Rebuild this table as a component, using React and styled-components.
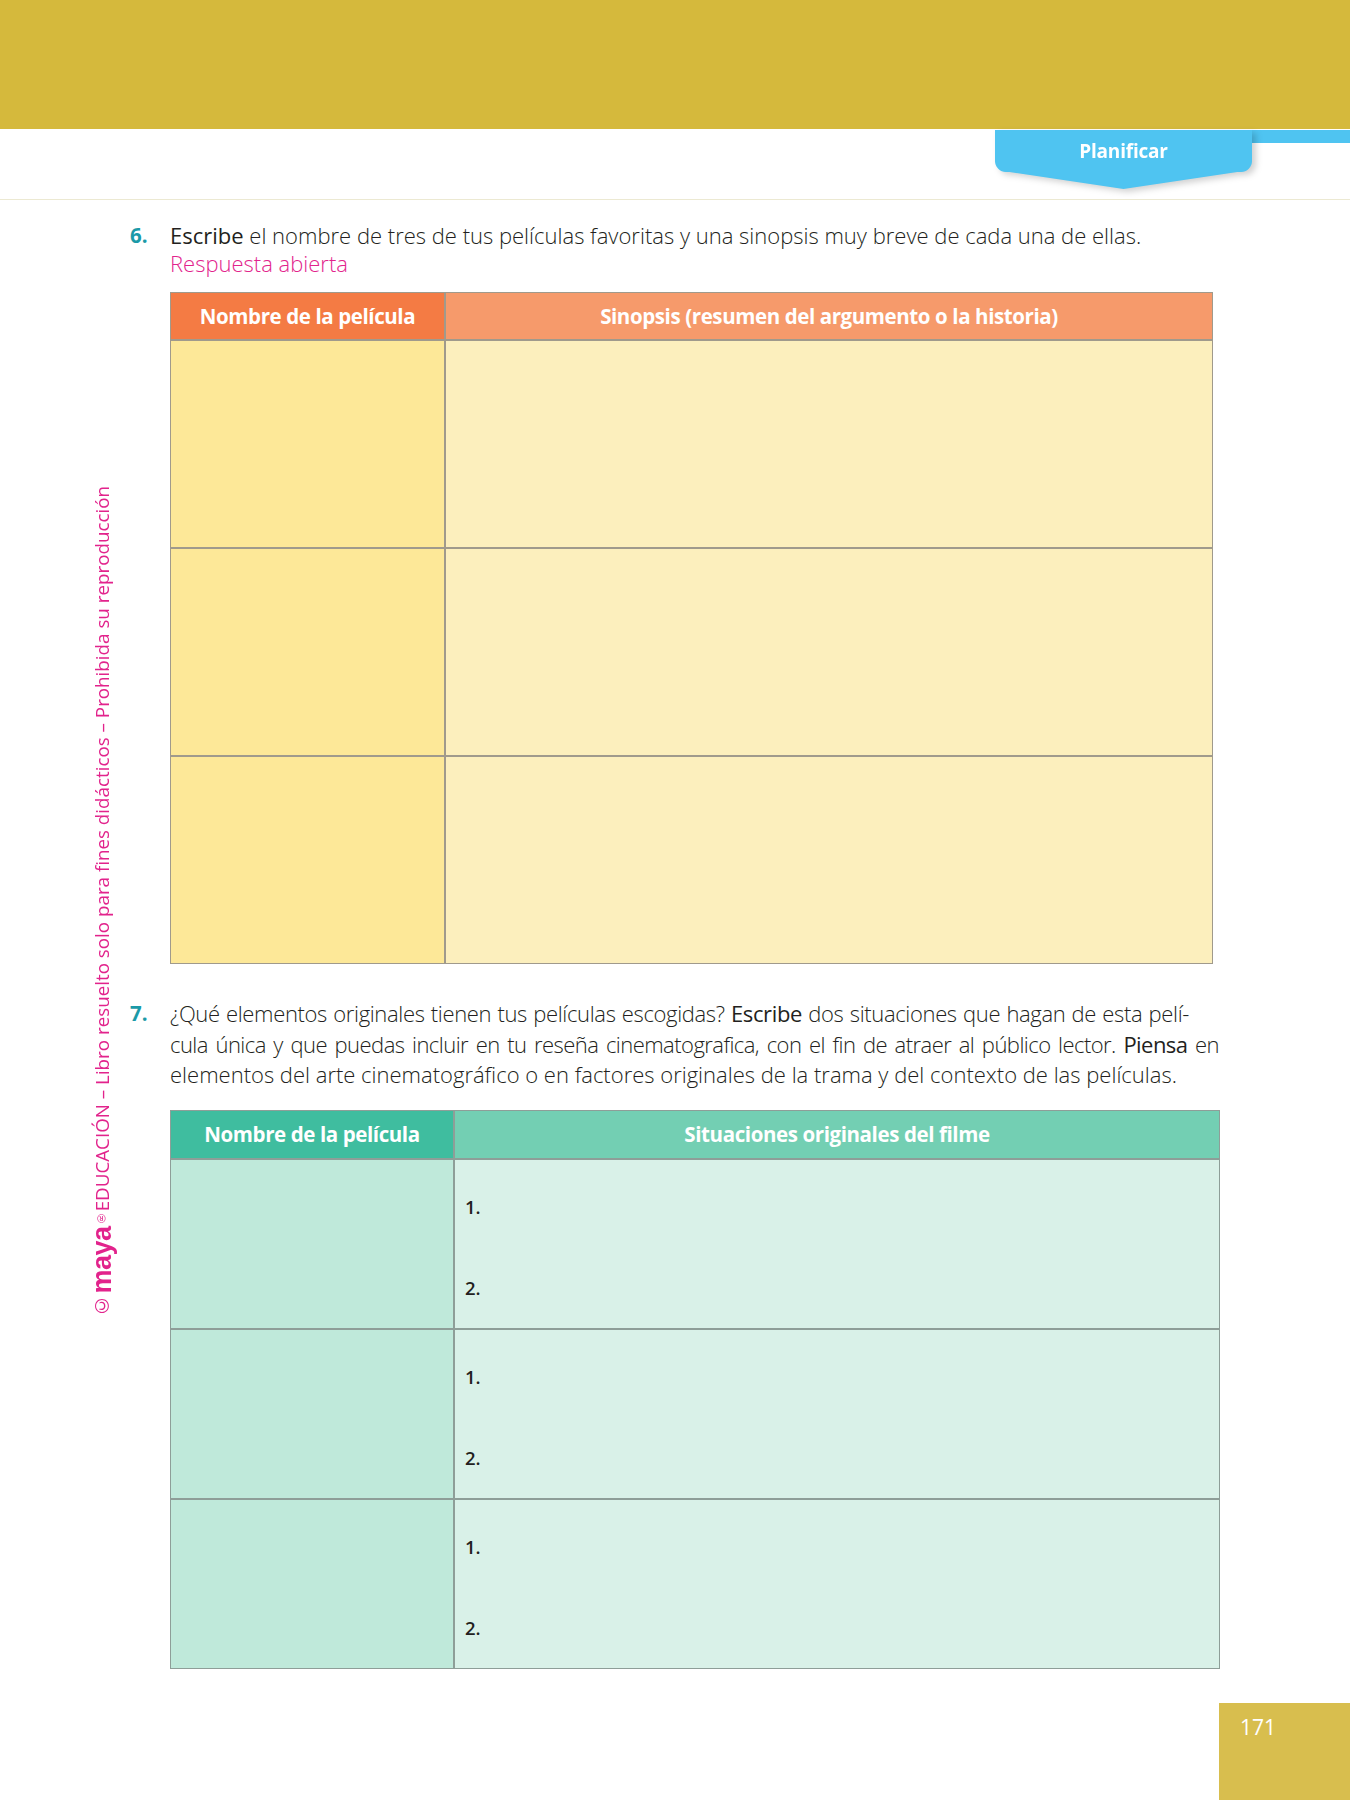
import styled, { createGlobalStyle } from "styled-components";

const GlobalStyle = createGlobalStyle`
  html, body { margin: 0; padding: 0; background: #fff; }
  body { font-family: "Open Sans", "Liberation Sans", sans-serif; color: #231f20; }
`;

const gold = "#d5b93c";
const blue = "#4fc4f1";

const Page = styled.div`
  width: 1350px;
  min-height: 1800px;
  display: flex;
  flex-direction: column;
`;

const TopBar = styled.div`
  height: 129px;
  background: ${gold};
`;

const TabRow = styled.div`
  height: 69px;
  display: flex;
  justify-content: flex-end;
  align-items: flex-start;
  border-bottom: 1px solid #ece9d2;
  margin-top: 1px;
`;

const TabWrap = styled.div`
  filter: drop-shadow(4px 3px 3px rgba(0, 0, 0, 0.18));
`;

const Tab = styled.div`
  position: relative;
  width: 257px;
  height: 42px;
  background: ${blue};
  border-radius: 0 0 11px 11px;
  color: #fff;
  font-weight: 700;
  font-size: 19px;
  display: flex;
  align-items: center;
  justify-content: center;
  letter-spacing: -0.2px;
  &::after {
    content: "";
    position: absolute;
    left: 8px;
    right: 8px;
    top: 41px;
    height: 18px;
    background: ${blue};
    clip-path: polygon(0 0, 100% 0, 50% 100%);
  }
`;

const Strip = styled.div`
  width: 98px;
  height: 13px;
  background: ${blue};
`;

const Body = styled.div`
  display: flex;
  flex: 1;
`;

const Rail = styled.div`
  width: 130px;
  padding-left: 89px;
  padding-top: 286px;
  box-sizing: border-box;
`;

const SideText = styled.div`
  writing-mode: vertical-rl;
  transform: rotate(180deg);
  color: #e2238c;
  font-size: 18.8px;
  white-space: nowrap;
  line-height: 1;
`;

const Logo = styled.span`
  font-family: "Liberation Sans", sans-serif;
  font-weight: 900;
  font-size: 27px;
  letter-spacing: -0.5px;
`;

const Reg = styled.span`
  font-size: 11px;
`;

const Main = styled.div`
  flex: 1;
  display: flex;
  flex-direction: column;
`;

const Question = styled.div`
  display: flex;
  margin-top: ${(p) => p.$top}px;
  font-size: 22px;
  line-height: ${(p) => p.$lh}px;
  font-weight: 300;
`;

const Num = styled.div`
  width: 40px;
  color: #1b9aa8;
  font-weight: 700;
  font-size: 20.5px;
`;

const QText = styled.div`
  flex: 1;
`;

const Line = styled.div`
  white-space: nowrap;
  width: ${(p) => p.$w || "auto"};
  text-align: ${(p) => (p.$justify ? "justify" : "left")};
  text-align-last: ${(p) => (p.$justify ? "justify" : "left")};
  letter-spacing: ${(p) => p.$ls || "0"};
`;

const Strong = styled.span`
  font-weight: 400;
`;

const Answer = styled.div`
  color: #e2238c;
`;

const Table = styled.div`
  margin-left: 40px;
  margin-top: ${(p) => p.$top}px;
  width: ${(p) => p.$w}px;
  display: grid;
  grid-template-columns: ${(p) => p.$col}px 1fr;
  grid-template-rows: ${(p) => p.$rows};
  gap: 2px;
  padding: 1px;
  background: ${(p) => p.$line};
  box-sizing: border-box;
`;

const Head = styled.div`
  background: ${(p) => p.$bg};
  color: #fff;
  font-weight: 700;
  font-size: 20.5px;
  letter-spacing: -0.4px;
  display: flex;
  align-items: center;
  justify-content: center;
`;

const Cell = styled.div`
  background: ${(p) => p.$bg};
  display: flex;
  flex-direction: column;
  padding: 34px 0 0 10px;
  gap: 56px;
  font-weight: 600;
  font-size: 18.5px;
  line-height: 25px;
`;

const Footer = styled.div`
  margin-top: auto;
  display: flex;
  justify-content: flex-end;
`;

const PageNum = styled.div`
  width: 131px;
  height: 97px;
  background: #d8be4e;
  color: #fff;
  font-size: 21px;
  padding: 10px 0 0 21px;
  box-sizing: border-box;
`;

const rows1 = [0, 1, 2];

export default function App() {
  return (
    <Page>
      <GlobalStyle />
      <TopBar />
      <TabRow>
        <TabWrap>
          <Tab>Planificar</Tab>
        </TabWrap>
        <Strip />
      </TabRow>
      <Body>
        <Rail>
          <SideText>
            ©<Logo>maya</Logo>
            <Reg>®</Reg>EDUCACIÓN – Libro resuelto solo para fines didácticos – Prohibida su reproducción
          </SideText>
        </Rail>
        <Main>
          <Question $top={21} $lh={28}>
            <Num>6.</Num>
            <QText>
              <Line>
                <Strong>Escribe</Strong> el nombre de tres de tus películas favoritas y una sinopsis muy breve de cada una de ellas.
              </Line>
              <Answer>Respuesta abierta</Answer>
            </QText>
          </Question>
          <Table $top={15} $w={1043} $col={273} $rows="46px 206px 206px 206px" $line="#a09a8c">
            <Head $bg="#f47b44">Nombre de la película</Head>
            <Head $bg="#f69a6b">Sinopsis (resumen del argumento o la historia)</Head>
            {rows1.map((i) => [
              <Cell key={"a" + i} $bg="#fde898" />,
              <Cell key={"b" + i} $bg="#fcefbd" />,
            ])}
          </Table>
          <Question $top={34} $lh={30.5}>
            <Num>7.</Num>
            <QText>
              <Line $justify $w="1019px" $ls="-0.35px">
                ¿Qué elementos originales tienen tus películas escogidas? <Strong>Escribe</Strong> dos situaciones que hagan de esta pelí-
              </Line>
              <Line $justify $w="1049px" $ls="-0.55px">
                cula única y que puedas incluir en tu reseña cinematografica, con el fin de atraer al público lector. <Strong>Piensa</Strong> en
              </Line>
              <Line>
                elementos del arte cinematográfico o en factores originales de la trama y del contexto de las películas.
              </Line>
            </QText>
          </Question>
          <Table $top={20} $w={1050} $col={282} $rows="47px 168px 168px 168px" $line="#8e9e98">
            <Head $bg="#3fbd9f">Nombre de la película</Head>
            <Head $bg="#73cfb3">Situaciones originales del filme</Head>
            {rows1.map((i) => [
              <Cell key={"a" + i} $bg="#bfe9da" />,
              <Cell key={"b" + i} $bg="#d9f1e8">
                <span>1.</span>
                <span>2.</span>
              </Cell>,
            ])}
          </Table>
          <Footer>
            <PageNum>171</PageNum>
          </Footer>
        </Main>
      </Body>
    </Page>
  );
}
